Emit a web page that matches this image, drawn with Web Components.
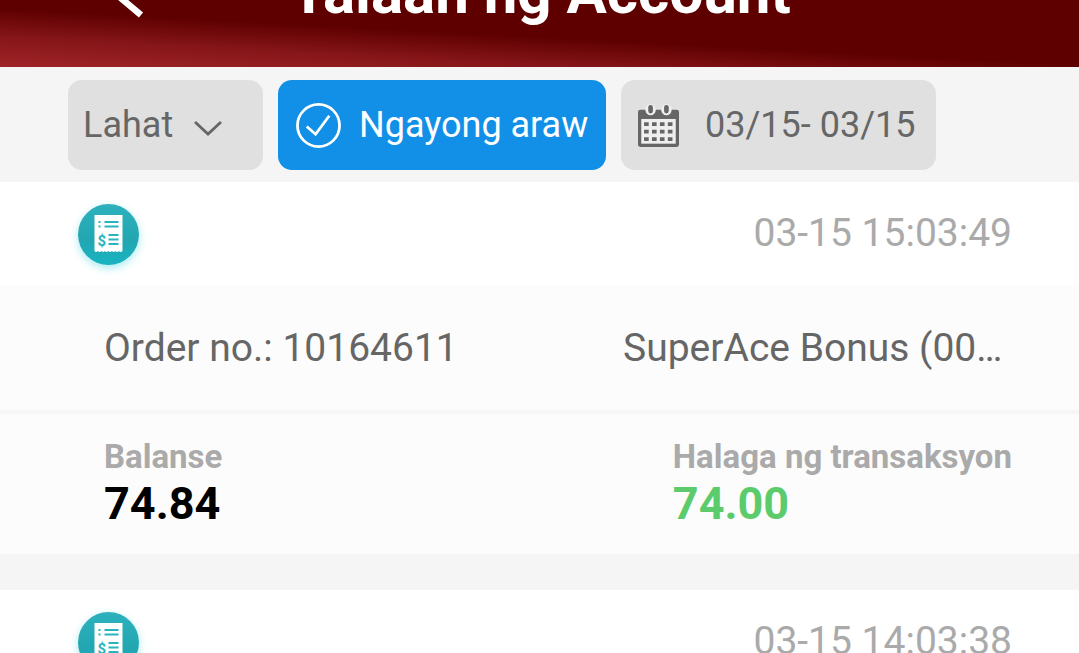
<!DOCTYPE html>
<html>
<head>
<meta charset="utf-8">
<title>Talaan ng Account</title>
<style>
    html, body { margin: 0; height: 100%; overflow: hidden; }
    body { background: #f5f5f5; font-family: Roboto, "Liberation Sans", sans-serif; }
</style>
</head>
<body>
<app-header>Talaan ng Account</app-header>
<filter-bar></filter-bar>
<record-card time="03-15 15:03:49" order="10164611" game="SuperAce Bonus (0011234567)" balance="74.84" amount="74.00"></record-card>
<record-card time="03-15 14:03:38"></record-card>

<script>
class AppHeader extends HTMLElement {
    constructor() {
        super();
        this.attachShadow({ mode: 'open' });
        this.shadowRoot.innerHTML = `
            <style>
                :host {
                    display: flex;
                    align-items: flex-end;
                    justify-content: center;
                    position: relative;
                    height: 67px;
                    overflow: hidden;
                    background: linear-gradient(3deg, #a02428 0%, #861619 24%, #5f0000 47%);
                }
                .title {
                    flex: none;
                    color: #fff;
                    font-size: 60px;
                    font-weight: 700;
                    line-height: 70px;
                    margin-bottom: 39px;
                    margin-left: 2px;
                    white-space: nowrap;
                }
                svg {
                    position: absolute;
                    left: 104px;
                    top: -30px;
                    width: 44px;
                    height: 52px;
                }
            </style>
            <svg viewBox="0 0 44 52" fill="none" stroke="#fff" stroke-width="6.5">
                <path d="M36 10 L12 24 L37 45"/>
            </svg>
            <div class="title"><slot></slot></div>
        `;
    }
}

class FilterBar extends HTMLElement {
    constructor() {
        super();
        this.attachShadow({ mode: 'open' });
        this.shadowRoot.innerHTML = `
            <style>
                :host {
                    display: flex;
                    gap: 15px;
                    height: 90px;
                    padding: 13px 0 12px 68px;
                    background: #f5f5f5;
                    font-size: 36px;
                    color: #666;
                }
                .chip {
                    display: flex;
                    align-items: center;
                    box-sizing: border-box;
                    height: 90px;
                    border-radius: 14px;
                    background: #e0e0e0;
                    white-space: nowrap;
                }
                .all { width: 195px; padding-left: 15px; }
                .all svg { width: 30px; height: 16px; margin-left: 20px; margin-top: 6px; }
                .today { width: 328px; padding-left: 17px; background: #1290e8; color: #fff; }
                .today svg { width: 47px; height: 47px; margin-right: 17px; }
                .date { width: 315px; padding-left: 17px; }
                .date svg { width: 41px; height: 45px; margin-right: 26px; }
            </style>
            <div class="chip all">
                <span>Lahat</span>
                <svg viewBox="0 0 30 16" fill="none" stroke="#666" stroke-width="2.8"><path d="M2 2 L15 14 L28 2"/></svg>
            </div>
            <div class="chip today">
                <svg viewBox="0 0 48 48" fill="none" stroke="#fff" stroke-width="2.8">
                    <circle cx="24" cy="24" r="21.5"/>
                    <path d="M12 25 L21 33 L35 14"/>
                </svg>
                <span>Ngayong araw</span>
            </div>
            <div class="chip date">
                <svg viewBox="0 0 44 46" fill="#666">
                    <rect x="0" y="6" width="44" height="40" rx="2.500"/>
                    <rect x="3.500" y="16" width="37" height="26.500" fill="#efefef"/>
                    <rect x="8" y="0" width="11" height="12" rx="5.500" fill="#efefef"/>
                    <rect x="25" y="0" width="11" height="12" rx="5.500" fill="#efefef"/>
                    <rect x="11" y="1" width="5" height="9" rx="2.500"/>
                    <rect x="28" y="1" width="5" height="9" rx="2.500"/>
                    <path d="M6.500 19.500h5v4h-5zM15 19.500h5v4h-5zM23.500 19.500h5v4h-5zM32 19.500h5v4h-5zM6.500 27.500h5v4h-5zM15 27.500h5v4h-5zM23.500 27.500h5v4h-5zM32 27.500h5v4h-5zM6.500 35.500h5v4h-5zM15 35.500h5v4h-5zM23.500 35.500h5v4h-5zM32 35.500h5v4h-5z"/>
                </svg>
                <span>03/15- 03/15</span>
            </div>
        `;
    }
}

class RecordCard extends HTMLElement {
    constructor() {
        super();
        this.attachShadow({ mode: 'open' });
    }

    connectedCallback() {
        const get = name => this.getAttribute(name) || '';
        // the last card is cut by the window, only its head is given
        const body = !this.hasAttribute('order') ? '' : `
            <div class="order">
                <span>Order no.: ${get('order')}</span>
                <span class="game">${get('game')}</span>
            </div>
            <div class="stats">
                <div>
                    <div class="label">Balanse</div>
                    <div class="value">${get('balance')}</div>
                </div>
                <div>
                    <div class="label">Halaga ng transaksyon</div>
                    <div class="value green">${get('amount')}</div>
                </div>
            </div>
        `;
        this.shadowRoot.innerHTML = `
            <style>
                :host {
                    display: block;
                    margin-bottom: 36px;
                    background: #fff;
                }
                .head {
                    display: flex;
                    align-items: center;
                    justify-content: space-between;
                    height: 103px;
                    padding: 0 67px 0 78px;
                }
                .badge {
                    width: 61px;
                    height: 61px;
                    margin-top: 1px;
                    border-radius: 50%;
                    background: linear-gradient(to bottom, #2db2bd, #22a6b2 60%, #18b4c2);
                    box-shadow: 0 3px 8px rgba(60,210,225,.45);
                    display: flex;
                    align-items: center;
                    justify-content: center;
                }
                .badge svg { width: 29px; height: 38px; }
                .time { font-size: 39px; color: #aaa; margin-top: -2px; }
                .order {
                    display: flex;
                    align-items: center;
                    justify-content: space-between;
                    box-sizing: border-box;
                    height: 129px;
                    padding: 0 66px 0 104px;
                    background: #fcfcfc;
                    font-size: 39px;
                    color: #666;
                    border-bottom: 4px solid #f6f6f6;
                }
                .game {
                    flex: none;
                    width: 390px;
                    overflow: hidden;
                    white-space: nowrap;
                    text-overflow: ellipsis;
                }
                .stats {
                    display: flex;
                    justify-content: space-between;
                    box-sizing: border-box;
                    height: 140px;
                    padding: 24px 67px 0 104px;
                    background: #fcfcfc;
                }
                .label { font-size: 33px; font-weight: 700; line-height: 38px; color: #aaa; }
                .value { font-size: 45px; font-weight: 700; line-height: 52px; color: #000; margin-top: 2px; }
                .value.green { color: #5ccb6c; }
            </style>
            <div class="head">
                <div class="badge">
                    <svg viewBox="0 0 28 38">
                        <path fill="#fff" d="M0 0 H28 V36 Q26 38 24.500 36 Q22.500 38 21 36 Q19 38 17.500 36 Q15.500 38 14 36 Q12 38 10.500 36 Q8.500 38 7 36 Q5 38 3.500 36 Q1.500 38 0 36 Z"/>
                        <path fill="none" stroke="#2bb3bd" stroke-width="2" d="M10 7 H24 M10 11.500 H24 M14 20 H24 M14 24.500 H24 M14 29 H24 M4 7 H6 M4 11.500 H6"/>
                        <text x="3" y="31" font-family="Roboto, sans-serif" font-size="15" font-weight="700" fill="#2bb3bd">$</text>
                    </svg>
                </div>
                <div class="time">${get('time')}</div>
            </div>
            ${body}
        `;
    }
}

customElements.define('app-header', AppHeader);
customElements.define('filter-bar', FilterBar);
customElements.define('record-card', RecordCard);
</script>
</body>
</html>
